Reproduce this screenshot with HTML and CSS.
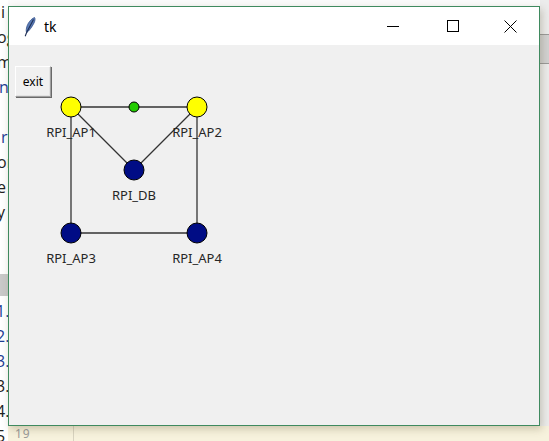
FILE: index.html
```html
<!DOCTYPE html>
<html>
<head>
<meta charset="utf-8">
<link rel="stylesheet" href="styles.css">
<title>tk</title>
</head>
<body>
<div class="desktop">
  <div class="bg-left">
    <div class="frag f-i">i</div>
    <div class="frag">og</div>
    <div class="frag">m</div>
    <div class="frag blue f-n">n</div>
    <div class="frag"></div>
    <div class="frag blue f-i">ri</div>
    <div class="frag">or</div>
    <div class="frag">e</div>
    <div class="frag">y</div>
    <div class="gap"></div>
    <div class="band"></div>
    <div class="frag num blue">1.</div>
    <div class="frag num blue">2.</div>
    <div class="frag num blue">3.</div>
    <div class="frag num">3.</div>
    <div class="frag num">4.</div>
    <div class="frag num">5</div>
  </div>
  <div class="bg-right"><div class="rband"></div></div>
  <div class="bg-bottom"><span class="lineno">19</span><span class="vline"></span></div>

  <div class="window">
    <div class="titlebar">
      <svg class="feather" width="12" height="20" viewBox="0 0 12 20">
        <path d="M10.5 0.5 C7 2 3.5 6 2.5 11 C2 13.5 2.2 15 2.8 15.5 C5 14 8 10 10 6 C11.2 3.5 11.3 1.5 10.5 0.5 Z" fill="#5a7bb5" stroke="#34508a" stroke-width="0.8"/>
        <path d="M9.5 2.5 L2.6 15.5 L1.2 19.2" fill="none" stroke="#1f2f55" stroke-width="1.1"/>
      </svg>
      <span class="title">tk</span>
      <div class="controls">
        <svg class="ctl" width="46" height="30" viewBox="0 0 46 30"><path d="M12 15.5 H24" stroke="#000" stroke-width="1"/></svg>
        <svg class="ctl" width="46" height="30" viewBox="0 0 46 30"><rect x="16.5" y="9.5" width="11" height="11" fill="none" stroke="#000" stroke-width="1"/></svg>
        <svg class="ctl" width="46" height="30" viewBox="0 0 46 30"><path d="M17.5 9.5 L29.5 21.5 M29.5 9.5 L17.5 21.5" stroke="#000" stroke-width="1"/></svg>
      </div>
    </div>
    <div class="content">
      <button class="exit">exit</button>
      <svg class="graph" width="240" height="230" viewBox="0 0 240 230">
        <g stroke="#333" stroke-width="1.3" fill="none">
          <line x1="62" y1="62" x2="188" y2="62"/>
          <line x1="62" y1="62" x2="62" y2="188"/>
          <line x1="188" y1="62" x2="188" y2="188"/>
          <line x1="62" y1="188" x2="188" y2="188"/>
          <line x1="62" y1="62" x2="125" y2="125"/>
          <line x1="188" y1="62" x2="125" y2="125"/>
        </g>
        <g stroke="#000" stroke-width="1">
          <circle cx="62" cy="62" r="10" fill="#ffff00"/>
          <circle cx="188" cy="62" r="10" fill="#ffff00"/>
          <circle cx="125" cy="62" r="5" fill="#22cc00"/>
          <circle cx="125" cy="125" r="10" fill="#000c85"/>
          <circle cx="62" cy="188" r="10" fill="#000c85"/>
          <circle cx="188" cy="188" r="10" fill="#000c85"/>
        </g>
        <g class="lbl" text-anchor="middle">
          <text x="62" y="92">RPI_AP1</text>
          <text x="188" y="92">RPI_AP2</text>
          <text x="125" y="155">RPI_DB</text>
          <text x="62" y="218">RPI_AP3</text>
          <text x="188" y="218">RPI_AP4</text>
        </g>
      </svg>
    </div>
  </div>
</div>
</body>
</html>
```
FILE: styles.css
```css
html, body {
  margin: 0;
  padding: 0;
}
body {
  width: 549px;
  height: 441px;
  overflow: hidden;
  background: #ffffff;
  font-family: "Noto Sans", "Open Sans", sans-serif;
}
.desktop {
  position: relative;
  width: 549px;
  height: 441px;
  overflow: hidden;
  background: #fbfbfb;
}
.bg-left {
  width: 8px;
  height: 441px;
  display: flex;
  flex-direction: column;
  padding-top: 0;
  background: #ffffff;
  overflow: hidden;
}
.frag {
  height: 25px;
  line-height: 25px;
  font-size: 16px;
  color: #222;
  white-space: nowrap;
  text-align: left;
  margin-left: -3px;
  flex: none;
  font-family: "Open Sans", sans-serif;
}
.frag.f-i { margin-left: 1px; }
.frag.f-n { margin-left: -1px; }
.frag.num {
  margin-left: -4px;
  height: 25px;
}
.blue { color: #1e3c94 !important; }
.gap { height: 49px; flex: none; }
.band {
  height: 22px;
  background: #c9c9c9;
  flex: none;
  margin-bottom: 3px;
}
.bg-right {
  position: absolute;
  left: 540px;
  top: 0;
  width: 9px;
  height: 441px;
  background: #ececec;
}
.rband {
  margin-top: 34px;
  height: 28px;
  background: #d2d2d2;
  border-top: 1px solid #9a9a9a;
  border-bottom: 1px solid #9a9a9a;
}
.bg-bottom {
  position: absolute;
  left: 8px;
  top: 426px;
  width: 541px;
  height: 15px;
  background: #f7f2dd;
  display: flex;
  align-items: flex-end;
}
.lineno {
  width: 65px;
  padding-left: 7px;
  box-sizing: border-box;
  font-size: 12px;
  line-height: 14px;
  color: #9a9a9a;
  letter-spacing: 1px;
}
.vline {
  width: 1px;
  height: 15px;
  background: #d8d3c0;
}
.window {
  position: absolute;
  left: 8px;
  top: 6px;
  width: 532px;
  height: 420px;
  box-sizing: border-box;
  border: 1px solid #3f8a5f;
  background: #f0f0f0;
  display: flex;
  flex-direction: column;
  box-shadow: 2px 3px 8px rgba(90, 80, 40, 0.28);
}
.titlebar {
  height: 38px;
  flex: none;
  background: #ffffff;
  display: flex;
  align-items: center;
}
.feather {
  margin-left: 15px;
  margin-top: 1px;
}
.title {
  margin-left: 8px;
  font-size: 14px;
  color: #000;
  font-family: "Noto Sans", sans-serif;
}
.controls {
  margin-left: auto;
  display: flex;
  margin-right: 6px;
}
.ctl {
  display: block;
  margin-left: 10px;
}
.content {
  flex: 1;
  position: relative;
  padding: 21px 0 0 6px;
}
.exit {
  display: block;
  width: 36px;
  height: 31px;
  padding: 0;
  margin: 0;
  background: #f0f0f0;
  border: 1px solid #ffffff;
  border-right-color: #a0a0a0;
  border-bottom-color: #a0a0a0;
  box-shadow: 1px 1px 0 #696969, inset -1px -1px 0 #e3e3e3;
  font-family: "Noto Sans", sans-serif;
  font-size: 12px;
  color: #000;
}
.graph {
  position: absolute;
  left: 0;
  top: 0;
}
.lbl text {
  font-family: "Noto Sans", sans-serif;
  font-size: 13px;
  fill: #262626;
}
```
